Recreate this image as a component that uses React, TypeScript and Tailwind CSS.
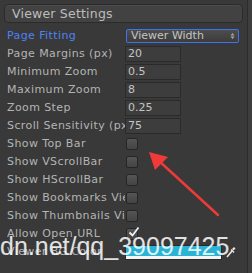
import { ReactNode } from 'react';

const font = { fontFamily: '"DejaVu Sans", Verdana, sans-serif' };

const Row = ({ label, active, children }: { label: string; active?: boolean; children?: ReactNode }) => (
  <div className="flex items-center h-[18px]">
    <div
      className={`w-[118px] shrink-0 overflow-hidden whitespace-nowrap text-[11px] tracking-[0.4px] ${active ? 'text-[#4f82f7]' : 'text-[#b4b4b4]'}`}
    >
      {label}
    </div>
    {children}
  </div>
);

const Field = ({ value }: { value: string }) => (
  <div className="w-[56px] h-[16px] border border-[#2a2a2a] bg-[#3d3d3d] pl-[2px] text-[11px] leading-[14px] text-[#c4c4c4]">
    {value}
  </div>
);

const Check = ({ checked }: { checked?: boolean }) => (
  <div className="relative ml-[1px] w-[12px] h-[12px] rounded-[2px] border border-[#262626] bg-gradient-to-b from-[#555555] to-[#444444]">
    {checked && (
      <svg className="absolute -top-[3px] left-[1px]" width="12" height="12" viewBox="0 0 12 12">
        <path d="M1.5 6.5 L4.5 9.5 L10.5 1.5" stroke="#f2f2f2" strokeWidth="1.8" fill="none" />
      </svg>
    )}
  </div>
);

export default function App() {
  return (
    <div className="relative w-[252px] h-[273px] overflow-hidden bg-[#393939] flex" style={font}>
      <div className="w-[247px] flex flex-col">
        <div className="mx-[4px] mt-[4px] h-[19px] rounded-[4px] border border-[#2b2b2b] bg-[#424242] shadow-[inset_0_1px_0_#4c4c4c] pl-[7px] text-[12.5px] tracking-[0.2px] leading-[17px] text-[#bdbdbd]">
          Viewer Settings
        </div>
        <div className="pl-[7px] mt-[4px] flex flex-col">
          <Row label="Page Fitting" active>
            <div className="ml-[1px] w-[113px] h-[14px] rounded-[2px] border border-[#3f72f0] bg-gradient-to-b from-[#4d4d4d] to-[#3c3c3c] flex items-center justify-between pl-[4px] pr-[3px] text-[11px] text-[#c4c4c4]">
              <span className="leading-[12px]">Viewer Width</span>
              <svg width="5" height="8" viewBox="0 0 5 8">
                <path d="M0.5 3.5 L2.5 1 L4.5 3.5 Z M0.5 4.5 L2.5 7 L4.5 4.5 Z" fill="#a8a8a8" />
              </svg>
            </div>
          </Row>
          <Row label="Page Margins (px)"><Field value="20" /></Row>
          <Row label="Minimum Zoom"><Field value="0.5" /></Row>
          <Row label="Maximum Zoom"><Field value="8" /></Row>
          <Row label="Zoom Step"><Field value="0.25" /></Row>
          <Row label="Scroll Sensitivity (px)"><Field value="75" /></Row>
          <Row label="Show Top Bar"><Check /></Row>
          <Row label="Show VScrollBar"><Check /></Row>
          <Row label="Show HScrollBar"><Check /></Row>
          <Row label="Show Bookmarks Viewer"><Check /></Row>
          <Row label="Show Thumbnails Viewer"><Check /></Row>
          <Row label="Allow Open URL"><Check checked /></Row>
          <Row label="Viewer BG Color">
            <div className="w-[97px] h-[15px] flex flex-col border border-[#2a2a2a]">
              <div className="flex-1 bg-[#2bb3d6]" />
              <div className="h-[3px] bg-[#f4f4f4]" />
            </div>
            <svg className="ml-[4px]" width="10" height="12" viewBox="0 0 10 12">
              <path d="M1 11 L6 5" stroke="#e8e8e8" strokeWidth="1.6" />
              <path d="M6 3 L8 1 L9.5 2.5 L7.5 4.5 Z" fill="#e8e8e8" />
              <path d="M5 3.5 L8 6.5" stroke="#e8e8e8" strokeWidth="1.4" />
            </svg>
          </Row>
        </div>
      </div>
      <div className="w-[1px] bg-[#2c2c2c]" />
      <div className="flex-1 bg-[#3e3e3e]" />

      <svg className="absolute left-0 top-0" width="252" height="273" viewBox="0 0 252 273">
        <path d="M218 215 L158 160" stroke="#f03a3a" strokeWidth="2.5" strokeLinecap="round" />
        <path d="M149 152 L168 157 L155 170 Z" fill="#f03a3a" />
      </svg>

      <div
        className="absolute left-[0px] top-[230px] whitespace-nowrap text-[25px] leading-[32px] text-white/85"
        style={{ fontFamily: '"Liberation Sans", Arial, sans-serif' }}
      >
        dn.net/qq_39097425
      </div>
    </div>
  );
}
